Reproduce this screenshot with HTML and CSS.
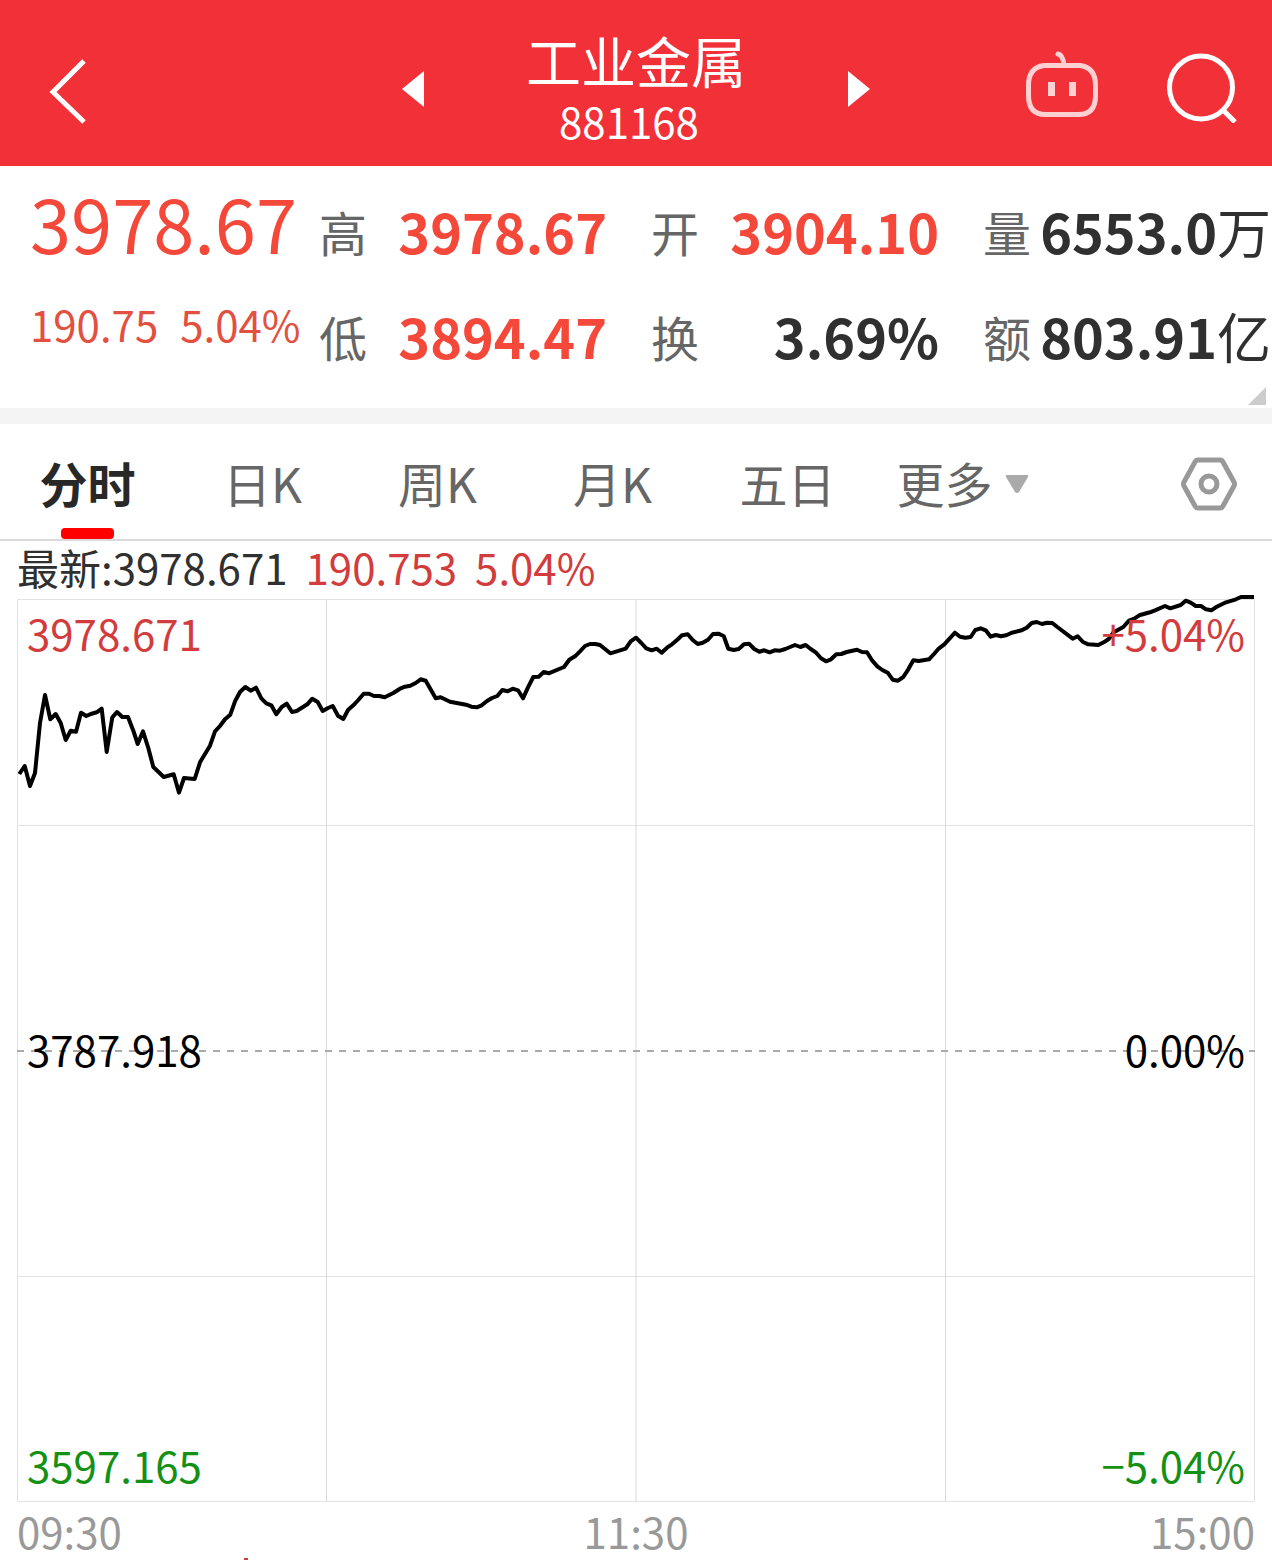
FILE: index.html
```html
<!DOCTYPE html>
<html lang="zh-CN">
<head>
<meta charset="utf-8">
<meta name="viewport" content="width=device-width, initial-scale=1">
<title>工业金属 881168</title>
<link rel="stylesheet" href="styles.css">
</head>
<body>
<header class="topbar">
  <button class="icon-button back" type="button" aria-label="返回">
    <svg width="40" height="68" viewBox="0 0 40 68" fill="none" stroke="#fff" stroke-width="5"><path d="M36 4 5 35l31 30"/></svg>
  </button>
  <div class="switcher">
    <button class="icon-button" type="button" aria-label="上一个">
      <svg width="22" height="36" viewBox="0 0 22 36" fill="#fff"><path d="M0 18 22 0v36z"/></svg>
    </button>
    <div class="heading">
      <h1 class="name">工业金属</h1>
      <p class="code">881168</p>
    </div>
    <button class="icon-button" type="button" aria-label="下一个">
      <svg width="22" height="36" viewBox="0 0 22 36" fill="#fff"><path d="M22 18 0 0v36z"/></svg>
    </button>
  </div>
  <div class="actions">
    <button class="icon-button" type="button" aria-label="智能助手">
      <svg width="76" height="72" viewBox="0 0 76 72" fill="none" stroke="#ffd0d2" stroke-width="5">
        <path d="M20 14.500h36q15.500 2 15.500 20v10q0 19-17 19h-33q-17 0-17-19v-10q0-18 15.500-20z" stroke-linejoin="round"/>
        <path d="M34 3q5 1 6 11" stroke-linecap="round"/>
        <path d="M27.500 31v14M48.500 31v14" stroke-width="7"/>
      </svg>
    </button>
    <button class="icon-button" type="button" aria-label="搜索">
      <svg width="72" height="72" viewBox="0 0 72 72" fill="none" stroke="#fff" stroke-width="5"><circle cx="35" cy="36.500" r="31.500"/><path d="m56 58 13 13"/></svg>
    </button>
  </div>
</header>

<main>
  <section class="quote" aria-label="行情">
    <div class="latest">
      <p class="price">3978.67</p>
      <p class="change"><span>190.75</span><span>5.04%</span></p>
    </div>
    <dl class="stats">
      <div class="stat"><dt>高</dt><dd class="up">3978.67</dd></div>
      <div class="stat"><dt>开</dt><dd class="up">3904.10</dd></div>
      <div class="stat"><dt>量</dt><dd>6553.0<span class="unit">万</span></dd></div>
      <div class="stat"><dt>低</dt><dd class="up">3894.47</dd></div>
      <div class="stat"><dt>换</dt><dd>3.69%</dd></div>
      <div class="stat"><dt>额</dt><dd>803.91<span class="unit">亿</span></dd></div>
    </dl>
    <svg class="expand" width="18" height="18" viewBox="0 0 18 18" fill="#ccc"><path d="M18 0v18H0z"/></svg>
  </section>

  <nav class="tabs" aria-label="周期">
    <button class="tab active" type="button">分时</button>
    <button class="tab" type="button">日K</button>
    <button class="tab" type="button">周K</button>
    <button class="tab" type="button">月K</button>
    <button class="tab" type="button">五日</button>
    <button class="tab more" type="button">更多
      <svg width="24" height="24" viewBox="0 0 24 24" fill="#aaa"><path d="M2 5h20q2 0 1 2l-9 15q-2 2-4 0L1 7q-1-2 1-2z"/></svg>
    </button>
    <button class="icon-button settings" type="button" aria-label="设置">
      <svg width="56" height="54" viewBox="0 0 56 54" fill="none" stroke="#999" stroke-width="5" stroke-linejoin="round"><path d="M17 3h22q2 0 3 2l11 20q1 2 0 4L42 49q-1 2-3 2H17q-2 0-3-2L3 29q-1-2 0-4L14 5q1-2 3-2z"/><circle cx="28" cy="27" r="8"/></svg>
    </button>
  </nav>

  <section class="intraday" aria-label="分时图">
    <p class="readout"><span>最新:3978.671</span><span class="rise">190.753</span><span class="rise">5.04%</span></p>
    <div class="chart">
      <svg class="plot" viewBox="17 595 1238 908" fill="none">
        <g stroke="#e2e2e2">
          <path d="M17.500 599.500h1237v902h-1237zM17.500 825.500h1237M17.500 1276.500h1237"/>
          <path d="M326.500 600v902M636 600v902M945.500 600v902" stroke="#dadada"/>
        </g>
        <path d="M17 1051h1238" stroke="#aaa" stroke-width="2" stroke-dasharray="7 7"/>
        <polyline stroke="#000" stroke-width="4" stroke-linejoin="round" points="19.3,774 24.7,766 30,786 35,773 40,723 45,695 50.3,719.3 55.7,714 60.7,723 65.7,740 70.7,730.7 76,731.7 81,712.7 86.3,716 91.7,713.7 96.7,712.3 101.7,708.7 106.7,752 112.3,717.3 117,712 122.3,717 128,717 133.3,730.7 137.7,744 143,731.3 148.3,748 153.3,767 158.3,771.7 163.7,777 173.7,774.3 179,792.7 184,778 194.7,779 200,762.3 210,745.7 215,731.3 220,726 225,719.3 230.3,714.7 235.3,700.7 240,692 245.3,687 250.7,690.7 256,687.7 261.3,698.3 266.3,703.3 271.3,705.3 276.3,714.3 281.7,707 286.7,703.7 292,712 296.7,711 307.3,704.3 312.3,698.7 317.7,702 322.7,711 328,708 332.7,706 338,715.7 343.3,719 348,710 353.3,705.3 358.3,700 363.7,693.7 369,693.7 374,696 379.3,696 384.7,697.3 393.3,693 400,688.7 405,686.7 410.3,685.7 415.7,683 420.7,679.3 425.7,680.7 431,690 435.7,698.3 440.7,697.3 450,701.7 466,704.7 471.3,706.7 476.7,707.3 481.7,705.3 487,701 492,698 497.3,696 502.3,690 507.7,691.3 512.7,688.7 518,690.3 523,698.3 528,687.3 533.3,677 538.7,676.7 543.7,672 548.7,673.3 564,667 569.3,659.7 575,656.3 580,651.3 585,646 590,644 595.3,644 600,645 605,649 610.3,653.3 625.7,648.7 630.7,641.3 636,637.7 641.3,643 646.3,648.3 651.7,650.3 656.7,648.7 661.7,652.7 667,647.7 672,644.3 677.3,639.7 682,635.3 687.7,634.3 692.7,640 697.7,644 702.7,642.7 708,639.7 713,634 718.3,633.7 723.7,636 728.3,648.7 733.7,650 738.7,649 744,644.3 749,643.7 754.3,649 759.3,651.7 764.3,650.3 769.7,652.3 774.7,650.3 780,650.7 785.3,649 795,645 800.3,647 805.7,645 810.7,649 815.7,652.3 821,658.3 826,661.3 831,659.3 836.3,654.3 841.3,654 846.7,652 857,649.7 862,652 867,652.3 872.3,660.7 877.3,666.3 882.3,670 887.7,672.7 892.7,679.7 898,680.7 903.3,677 908.3,669.3 913.3,660.3 918.7,661 929,659.3 934,654 939,648.3 944.3,644.3 955,632.7 960,636.7 965.3,637.7 970.7,637 975.3,630 980.7,628.3 985.7,630.3 990.7,636.7 995.7,635 1001,636.3 1006.3,635.3 1011.7,632.7 1021.7,630.3 1026.7,627.7 1031.7,623 1036.7,622 1042,624 1047,622.7 1052.3,623 1057.3,627 1072.7,638.7 1077.7,636.3 1083,642 1088.3,644.3 1098.3,645 1103.7,642.3 1108.7,639 1113.7,632.3 1123.3,627 1129,620.7 1134.3,618.7 1139.3,615.3 1150,612.3 1155,610.3 1165,606 1170.3,608.3 1180.7,605 1185.7,600.7 1190.7,602.7 1195.7,606 1201,606 1206,609.3 1211.3,610.3 1216.3,607 1226,602.3 1236,599.3 1241,597 1254,597"/>
      </svg>
      <div class="scale">
        <p class="level rise"><span>3978.671</span><span>+5.04%</span></p>
        <p class="level"><span>3787.918</span><span>0.00%</span></p>
        <p class="level fall"><span>3597.165</span><span>−5.04%</span></p>
      </div>
    </div>
    <p class="hours"><span>09:30</span><span>11:30</span><span>15:00</span></p>
    <svg class="volume" viewBox="17 0 1238 2" fill="#d23c3c"><path d="M244 0h4v2h-4z"/></svg>
  </section>
</main>
</body>
</html>
```

FILE: styles.css
```css
* {
  box-sizing: border-box;
}

body,
h1,
p,
dl,
dd {
  margin: 0;
}

body {
  background: #fff;
  color: #303030;
  font-family: "Noto Sans CJK SC", sans-serif;
  font-size: 42px;
  line-height: 48px;
}

svg {
  display: block;
}

button {
  padding: 0;
  border: 0;
  background: none;
  color: inherit;
  font: inherit;
  cursor: pointer;
}

.topbar {
  display: grid;
  grid-template-columns: 1fr 468px 1fr;
  align-items: center;
  height: 166px;
  padding: 0 34px;
  background: #f23038;
  color: #fff;
}

.back {
  justify-self: start;
  padding: 16px 0 0 14px;
}

.switcher {
  display: flex;
  align-items: center;
  justify-content: space-between;
  padding-top: 12px;
}

.heading {
  display: flex;
  flex-direction: column;
  align-items: center;
}

.name {
  font-size: 55px;
  font-weight: 400;
  line-height: 64px;
}

.code {
  padding-right: 14px;
  line-height: 60px;
}

.actions {
  display: flex;
  justify-content: flex-end;
  gap: 66px;
  padding-top: 8px;
}

.quote {
  position: relative;
  display: grid;
  grid-template-columns: 289px 1fr;
  padding: 12px 1px 20px 30px;
  border-bottom: 16px solid #f4f4f4;
}

.price {
  color: #f4483a;
  font-size: 74px;
  line-height: 88px;
}

.change {
  display: flex;
  gap: 22px;
  padding-top: 34px;
  color: #e2503f;
}

.stats {
  display: grid;
  grid-template-columns: repeat(3, 1fr);
  column-gap: 44px;
}

.stat {
  display: flex;
  align-items: center;
  justify-content: space-between;
  height: 105px;
  white-space: nowrap;
}

.stat dt {
  color: #666;
  font-size: 48px;
}

.stat dd {
  font-size: 54px;
  font-weight: 700;
}

.stat .up {
  color: #f4483a;
}

.unit {
  font-weight: 400;
}

.expand {
  position: absolute;
  right: 6px;
  bottom: 3px;
}

.tabs {
  display: grid;
  grid-template-columns: repeat(6, 175fr) 222fr;
  height: 117px;
  border-bottom: 2px solid #dadada;
}

.tab {
  position: relative;
  color: #666;
  font-size: 48px;
}

.active {
  color: #282828;
  font-weight: 700;
}

.active::after {
  content: "";
  position: absolute;
  bottom: 0;
  left: 50%;
  width: 53px;
  height: 11px;
  margin-left: -27px;
  border-radius: 4px;
  background: #f00;
}

.more {
  display: flex;
  align-items: center;
  justify-content: center;
  gap: 12px;
}

.settings {
  justify-self: end;
  padding: 5px 35px 0 0;
}

.intraday {
  padding: 0 17px;
}

.readout {
  display: flex;
  gap: 18px;
  height: 54px;
  padding-top: 2px;
}

.rise {
  color: #d23c3c;
}

.fall {
  color: #149114;
}

.chart {
  display: grid;
}

.plot,
.scale {
  grid-area: 1 / 1;
}

.plot {
  width: 100%;
}

.scale {
  display: flex;
  flex-direction: column;
  justify-content: space-between;
  padding: 14px 10px;
}

.level {
  display: flex;
  justify-content: space-between;
}

.level:not(.rise, .fall) {
  color: #000;
}

.hours {
  display: flex;
  justify-content: space-between;
  height: 55px;
  padding-top: 4px;
  color: #999;
}

.volume {
  width: 100%;
}
```
